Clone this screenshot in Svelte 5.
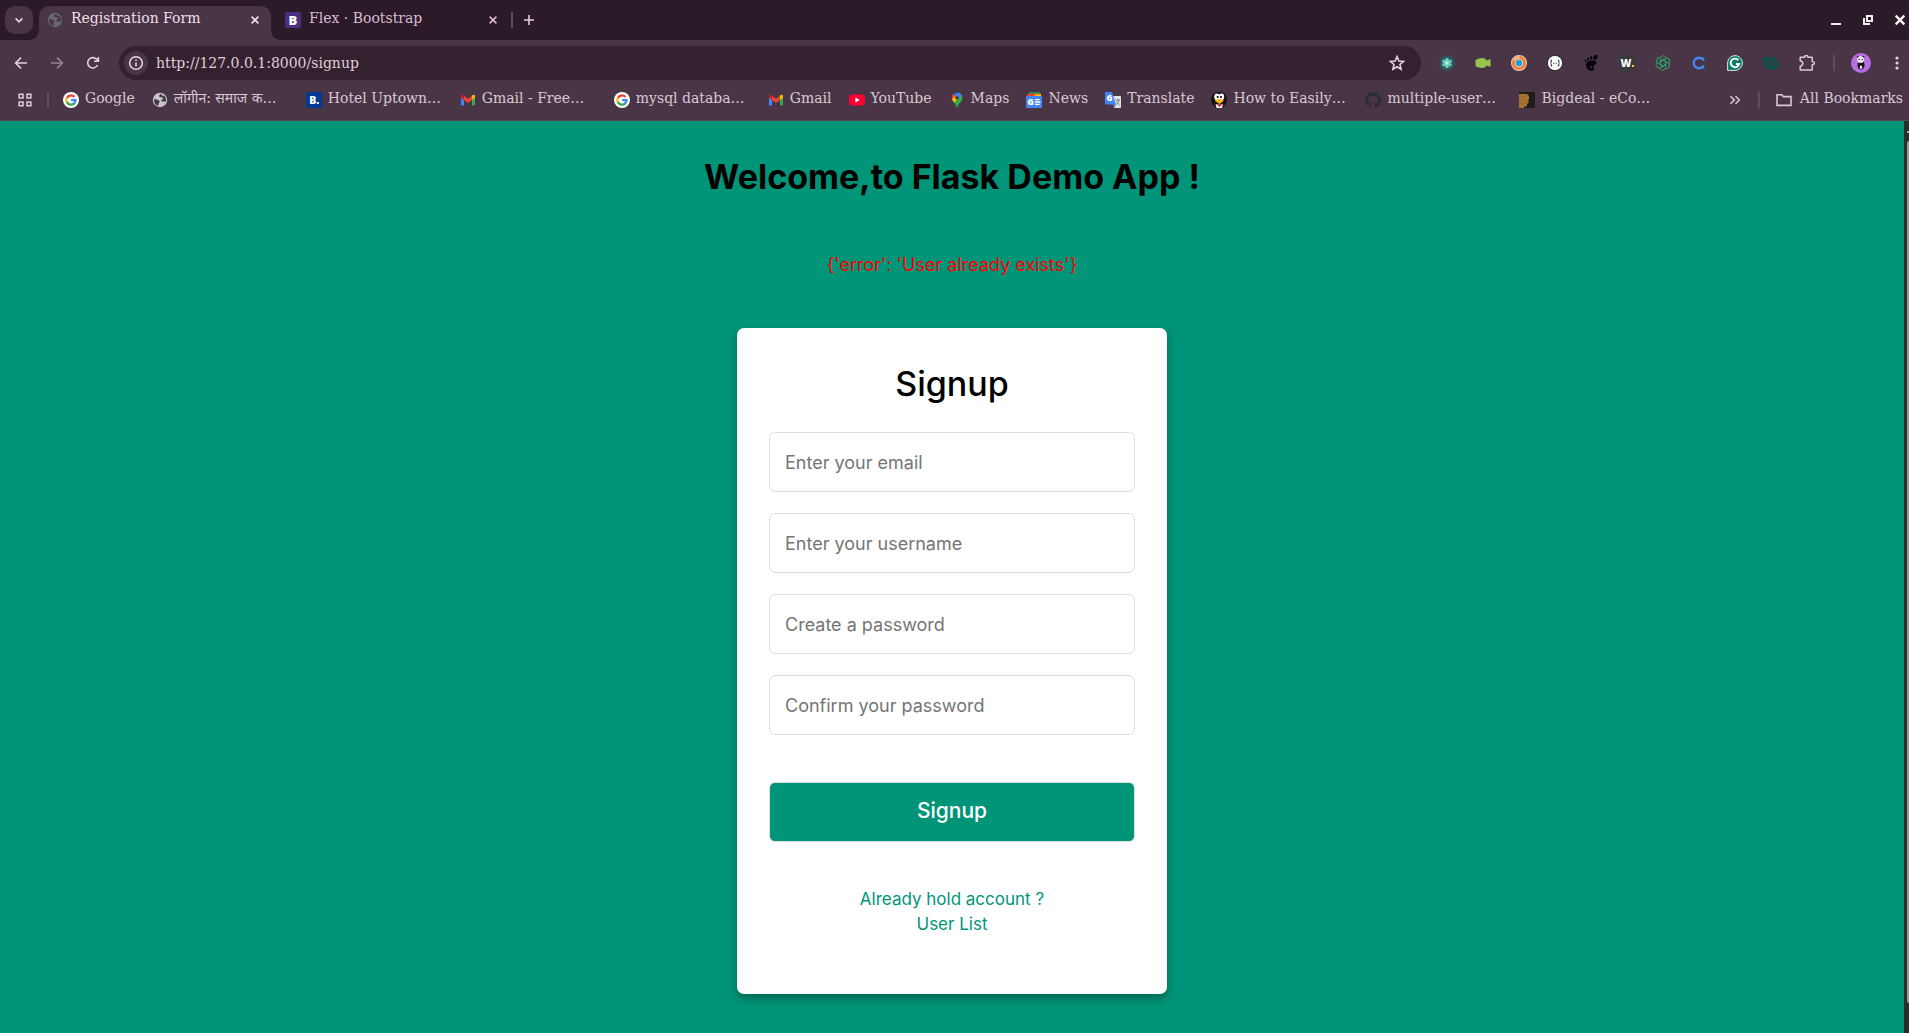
<script lang="ts">
  const bookmarks = [
    { icon: 'google', label: 'Google' },
    { icon: 'globe', label: 'लॉगीन: समाज क…', long: true },
    { icon: 'booking', label: 'Hotel Uptown…', long: true },
    { icon: 'gmail', label: 'Gmail - Free…', long: true },
    { icon: 'google', label: 'mysql databa…', long: true },
    { icon: 'gmail', label: 'Gmail' },
    { icon: 'youtube', label: 'YouTube' },
    { icon: 'maps', label: 'Maps' },
    { icon: 'news', label: 'News' },
    { icon: 'translate', label: 'Translate' },
    { icon: 'tux', label: 'How to Easily…', long: true },
    { icon: 'github', label: 'multiple-user…', long: true },
    { icon: 'bigdeal', label: 'Bigdeal - eCo…', long: true }
  ];
  const extensions = ['atom', 'fish', 'ring', 'braces', 'foot', 'w', 'knot', 'c', 'grammar', 'camera', 'puzzle'];
  const fields = [
    { id: 'email', type: 'email', hint: 'Enter your email' },
    { id: 'username', type: 'text', hint: 'Enter your username' },
    { id: 'password', type: 'password', hint: 'Create a password' },
    { id: 'confirm', type: 'password', hint: 'Confirm your password' }
  ];
  let url = $state('http://127.0.0.1:8000/signup');
</script>

{#snippet icon(name: string)}
  <svg class="icon" viewBox="0 0 16 16" aria-hidden="true">
    {#if name === 'google'}
      <circle cx="8" cy="8" r="8" fill="#fff" />
      <g fill="none" stroke-width="2.3">
        <path d="M11.5 5A4.7 4.7 0 0 0 3.9 5.9" stroke="#ea4335" />
        <path d="M3.9 5.8A4.7 4.7 0 0 0 3.9 10.3" stroke="#fbbc05" />
        <path d="M3.8 10.1A4.7 4.7 0 0 0 11.2 11.4" stroke="#34a853" />
        <path d="M8.1 8.1H12.6A4.6 4.6 0 0 1 11 11.6" stroke="#4285f4" />
      </g>
    {:else if name === 'globe' || name === 'globe-dim'}
      <circle cx="8" cy="8" r="7.2" fill={name === 'globe' ? '#c3c6ca' : '#65696f'} />
      <path d="M2.2 7.2C4.5 7 5.4 7.8 6.8 8.5C8.4 9.3 7.2 10.5 6.8 11.2C6.3 12.2 6.8 13.1 6 13.8C3.6 13 2 11 2 8ZM8.2 2.1L7 4L8 5.3L10.2 5.2L11.2 7.1L9 8.3L10.3 9.7L12.2 9.2L13.8 10C14.5 7.5 13.8 5 11.8 3.4L10.5 4.1L9.8 2.5Z" fill="#4a3546" />
    {:else if name === 'booking'}
      <rect width="16" height="16" rx="2" fill="#003b95" />
      <text x="3.2" y="12" class="glyph" font-size="10.5" fill="#fff">B.</text>
    {:else if name === 'bootstrap'}
      <rect width="16" height="16" rx="2" fill="#4b2e83" />
      <text x="3.4" y="12.8" class="glyph" font-size="13" fill="#fff">B</text>
    {:else if name === 'gmail'}
      <path d="M1 4.5V13.5H4V7Z" fill="#4285f4" /><path d="M15 4.5V13.5H12V7Z" fill="#34a853" />
      <path d="M1 4.2Q1 2.5 2.8 2.8L4 3.7V8L1 5.8Z" fill="#c5221f" />
      <path d="M4 3.7L8 6.7L12 3.7V8L8 11L4 8Z" fill="#ea4335" />
      <path d="M15 4.2Q15 2.5 13.2 2.8L12 3.7V8L15 5.8Z" fill="#fbbc04" />
    {:else if name === 'youtube'}
      <rect y="2.4" width="16" height="11.2" rx="3" fill="#ff0033" /><path d="M6.4 5.6L10.6 8L6.4 10.4Z" fill="#fff" />
    {:else if name === 'maps'}
      <path d="M8 .5A5.3 5.3 0 0 0 4 2.3L8 6Z" fill="#1a73e8" /><path d="M4 2.3C2.6 4 2.5 5.8 3 7.2L6.3 5.8L8 3.8Z" fill="#ea4335" />
      <path d="M8 .5C11 .6 13.3 2.9 13.3 5.8L8.7 6.6L7 4Z" fill="#4285f4" />
      <path d="M3 7.2C3.4 8.5 4.3 9.6 5.3 10.9L9.7 6L6.3 4Z" fill="#fbbc04" />
      <path d="M5.3 10.8C6.7 12.4 7.2 13.6 7.5 15Q8 16 8.5 15C9.3 11.2 13.3 10.5 13.3 5.8L12.4 3Z" fill="#34a853" />
      <circle cx="8" cy="5.8" r="1.8" fill="#4a3546" />
    {:else if name === 'news'}
      <path d="M3 0H14L13 5H3Z" fill="#0c9d58" /><path d="M1 2L12 1L13 6H2Z" fill="#ea4335" /><path d="M8 3L15 1.8V7H8Z" fill="#ffc107" />
      <rect y="4" width="16" height="12" rx="1" fill="#4285f4" />
      <text x="1.2" y="13" class="glyph" font-size="9" fill="#fff">G</text>
      <path d="M9 7.6H13.6M9 10H14.5M9 12.4H13.6" stroke="#fff" stroke-width="1.3" />
    {:else if name === 'translate'}
      <path d="M6 4H15Q16 4 16 5V15Q16 16 15 16H9Z" fill="#dfe3e8" /><path d="M8 12.5H11L9 16Z" fill="#2457c5" />
      <path d="M1 0H7L11 12.5H1Q0 12.5 0 11.5V1Q0 0 1 0Z" fill="#4285f4" />
      <text x="1.4" y="9.3" class="glyph" font-size="8" fill="#fff">G</text>
      <path d="M10.5 8H15M12.7 7V8M14.2 8Q13.5 11 11.5 12.4M11.5 9.5Q12.7 12 14.5 13" fill="none" stroke="#6b7480" stroke-width=".9" />
    {:else if name === 'tux'}
      <path d="M8 0C13 0 15.8 3 15.8 7.5C15.8 11 14 13.5 12 14.5L11 16H5L4 14.5C2 13.5 .2 11 .2 7.5C.2 3 3 0 8 0Z" fill="#14110f" />
      <ellipse cx="5.9" cy="4.8" rx="2.7" ry="3.4" fill="#fff" /><ellipse cx="10.5" cy="4.8" rx="2.7" ry="3.4" fill="#fff" />
      <circle cx="6.7" cy="5" r="1.1" /><circle cx="10" cy="5" r="1.1" />
      <path d="M4.5 12L8.3 12.8L12 12L11 16H5.5Z" fill="#f4f1ee" /><path d="M5 11.4L8 13L12 11.4L8.6 15Z" fill="#d6222a" /><path d="M3.5 8.8L8.3 6.6L13 8.8L8.5 12Z" fill="#f9b21a" />
    {:else if name === 'github'}
      <path fill="#292f36" d="M8 .2a8 8 0 0 0-2.5 15.6c.4.1.5-.2.5-.4v-1.5c-2.2.5-2.7-1-2.7-1-.4-.9-.9-1.2-.9-1.2-.7-.5.1-.5.1-.5.8.1 1.2.8 1.2.8.7 1.3 1.9.9 2.3.7.1-.5.3-.9.5-1.1-1.8-.2-3.6-.9-3.6-4 0-.9.3-1.6.8-2.1-.1-.2-.4-1 .1-2.1 0 0 .7-.2 2.2.8a7.6 7.6 0 0 1 4 0c1.5-1 2.2-.8 2.2-.8.4 1.1.2 1.9.1 2.1.5.6.8 1.3.8 2.1 0 3.1-1.9 3.7-3.7 3.9.3.3.6.8.6 1.5v2.4c0 .2.1.5.5.4A8 8 0 0 0 8 .2Z" />
    {:else if name === 'bigdeal'}
      <rect width="16" height="16" fill="#201d1b" /><path d="M0 2H8L10 4V7L9 8L10 10L8 12V14L5 15V16H0Z" fill="#a87432" /><path d="M0 5H7M0 8H8M0 11H7" stroke="#96652b" />
    {:else if name === 'atom'}
      <circle cx="8" cy="8" r="8" fill="#30505e" />
      <g fill="#65d3b7"><circle cx="8" cy="4.6" r="1.8" /><circle cx="11" cy="6.3" r="1.8" /><circle cx="11" cy="9.7" r="1.8" /><circle cx="8" cy="11.4" r="1.8" /><circle cx="5" cy="9.7" r="1.8" /><circle cx="5" cy="6.3" r="1.8" /></g>
      <circle cx="8" cy="8" r="2" fill="#b6f2df" />
    {:else if name === 'fish'}
      <path d="M.5 5Q3 3 8 3Q10 3 12 5.5L15.5 4V12L12 10.5Q10 13 7 13Q3 13 .5 11Z" fill="#98c34d" />
    {:else if name === 'ring'}
      <circle cx="8" cy="8" r="8" fill="#e7d9c7" /><circle cx="8" cy="8" r="5.6" fill="none" stroke="#f0803c" stroke-width="3.2" /><path d="M3 5A5.6 5.6 0 0 1 9 2.5" fill="none" stroke="#f9b27c" stroke-width="2.5" /><circle cx="8" cy="8" r="3.2" fill="#1a9fe0" />
    {:else if name === 'braces'}
      <circle cx="8" cy="8" r="7.6" fill="#fff" stroke="#171017" stroke-width=".8" />
      <path d="M5.2 5Q4 5 4.2 6.6Q4.2 8 3.4 8Q4.2 8 4.2 9.4Q4 11 5.2 11M10.8 5Q12 5 11.8 6.6Q11.8 8 12.6 8Q11.8 8 11.8 9.4Q12 11 10.8 11" fill="none" stroke="#333" stroke-width="1.1" />
      <path d="M6 8.2H7M7.5 8.2H8.5M9 8.2H10" stroke="#555" />
    {:else if name === 'foot'}
      <g fill="#080508"><path d="M13.4 6.8C14 10 11 9.5 10.6 11C10.4 12 11 12.2 11 13.4C11 15.2 9.4 16 7.6 15.8C5 15.4 3 13 3 10C3 6.5 6 5.3 9.2 5.4C11.4 5.4 13 5.4 13.4 6.8Z" /><ellipse cx="12.5" cy="2.3" rx="2" ry="2.5" transform="rotate(20 12.5 2.3)" /><ellipse cx="8.2" cy="2.9" rx="1.2" ry="1.8" /><ellipse cx="5.1" cy="4" rx="1" ry="1.5" /><ellipse cx="2.6" cy="5.8" rx=".9" ry="1.3" /></g>
      <path d="M7.4 10.8Q7.8 13 9.3 12.4" fill="none" stroke="#4a3546" stroke-width="1.3" />
    {:else if name === 'w'}
      <rect width="16" height="16" rx="1" fill="#383a39" /><text x="1.4" y="11.8" class="glyph" font-size="10.5" fill="#fff">W</text><circle cx="14" cy="10.9" r="1.2" fill="#efd34b" />
    {:else if name === 'knot'}
      <g fill="none" stroke="#2aa765" stroke-width="1">
        {#each [0, 60, 120, 180, 240, 300] as turn}
          <path d="M5.3 9.2V4.2C5.3 .4 10 -.2 11.4 2.6M8 5L11.8 7.1" transform="rotate({turn} 8 8)" />
        {/each}
      </g>
    {:else if name === 'c'}
      <path d="M12.2 4.8A5.3 5.3 0 1 0 12.2 11.2" fill="none" stroke="#4088f4" stroke-width="2.4" /><path d="M12.6 2.5V6M12.6 10V13.5" stroke="#4088f4" stroke-width="1.4" />
    {:else if name === 'grammar'}
      <path d="M8 .6A7.4 7.4 0 1 1 8 15.4H.6V8A7.4 7.4 0 0 1 8 .6Z" fill="#087d68" stroke="#d8e3df" stroke-width="1" />
      <path d="M11.4 5.2A4.3 4.3 0 1 0 12.2 9H9" fill="none" stroke="#fff" stroke-width="1.9" />
    {:else if name === 'camera'}
      <path d="M3.5 2H10Q13 2 13.5 5L16 12H13V14H3.5L.5 11V7L0 6V4Z" fill="#085348" /><rect x="5" y="5.2" width="5.6" height="5.2" rx="1.5" fill="none" stroke="#4a3546" stroke-width="1.2" /><circle cx="7.8" cy="7.8" r="1" fill="#4a3546" />
    {:else if name === 'puzzle'}
      <path d="M1.2 2.2H5.7Q5.8 .4 7.3 .4Q8.8 .4 9 2.2H13.2V6.4Q15.3 6.5 15.3 8.1Q15.3 9.7 13.2 9.8V14.9H1.2V11.2Q3.8 10.7 3.8 8.5Q3.8 6.3 1.2 5.8Z" fill="none" stroke="#e3c5dc" stroke-width="1.5" stroke-linejoin="round" />
    {:else if name === 'close'}
      <path d="M4.6 4.6L11.4 11.4M11.4 4.6L4.6 11.4" class="line" />
    {:else if name === 'plus'}
      <path d="M8 3V13M3 8H13" class="line" />
    {:else if name === 'chevron'}
      <path d="M4.6 6.4L8 9.8L11.4 6.4" class="line" />
    {:else if name === 'back'}
      <path d="M14 8H3M8 2.6L2.6 8L8 13.4" class="line" />
    {:else if name === 'forward'}
      <path d="M2 8H13M8 2.6L13.4 8L8 13.4" class="line" />
    {:else if name === 'reload'}
      <path d="M12.6 10A5.2 5.2 0 1 1 12 4.6L13.2 6M13.4 2V6.3H9" class="line" />
    {:else if name === 'info'}
      <circle cx="8" cy="8" r="6.3" class="line" /><path d="M8 7.4V11.2M8 4.6V6" class="line" />
    {:else if name === 'star'}
      <path d="M8 1.6L9.9 6L14.6 6.4L11 9.5L12.1 14.2L8 11.7L3.9 14.2L5 9.5L1.4 6.4L6.1 6Z" class="line" />
    {:else if name === 'apps'}
      <path d="M2.2 2.2H6V6H2.2ZM10 2.2H13.8V6H10ZM2.2 10H6V13.8H2.2ZM10 10H13.8V13.8H10Z" class="line" />
    {:else if name === 'more'}
      <path d="M3.5 4.2L7.3 8L3.5 11.8M8.5 4.2L12.3 8L8.5 11.8" class="line" />
    {:else if name === 'folder'}
      <path d="M1 2.8H5.7L7.4 4.6H15V13.4H1Z" class="line" />
    {:else if name === 'dots'}
      <g fill="currentColor"><circle cx="8" cy="3" r="1.6" /><circle cx="8" cy="8" r="1.6" /><circle cx="8" cy="13" r="1.6" /></g>
    {:else if name === 'minimize'}
      <path d="M3 12H13" stroke="currentColor" stroke-width="2" />
    {:else if name === 'restore'}
      <path d="M7 4H12V9H7ZM4 6V12H10" fill="none" stroke="currentColor" stroke-width="2" />
    {:else if name === 'quit'}
      <path d="M3.7 3.7L12.3 12.3M12.3 3.7L3.7 12.3" stroke="currentColor" stroke-width="2.4" />
    {:else if name === 'panda'}
      <circle cx="8" cy="8" r="8" fill="#b66fe3" /><ellipse cx="8" cy="9.5" rx="2.8" ry="3.8" fill="#181418" /><circle cx="7.6" cy="5.2" r="2.8" fill="#e8e4e6" /><path d="M4.7 3.4L6 2.6M9.3 2.6L10.7 3.4M6 5.2H7M8.5 5.2H9.4" stroke="#181418" stroke-width=".9" /><path d="M7.1 10.2H8.9V12.6H7.1Z" fill="#ece7ed" />
    {/if}
  </svg>
{/snippet}

<div class="window">
  <header class="chrome">
    <div class="tabs">
      <button class="tab-search" aria-label="Search tabs">{@render icon('chevron')}</button>
      <div class="tab active">
        {@render icon('globe-dim')}
        <span class="label">Registration Form</span>
        <button class="plain" aria-label="Close Registration Form">{@render icon('close')}</button>
      </div>
      <div class="tab">
        {@render icon('bootstrap')}
        <span class="label">Flex · Bootstrap</span>
        <button class="plain" aria-label="Close Flex">{@render icon('close')}</button>
      </div>
      <span class="divider"></span>
      <button class="plain add" aria-label="New tab">{@render icon('plus')}</button>
      <div class="controls">
        <button class="plain" aria-label="Minimize">{@render icon('minimize')}</button>
        <button class="plain" aria-label="Restore">{@render icon('restore')}</button>
        <button class="plain" aria-label="Close window">{@render icon('quit')}</button>
      </div>
    </div>

    <div class="toolbar">
      <nav class="history" aria-label="History">
        <button class="plain" aria-label="Back">{@render icon('back')}</button>
        <button class="plain dim" aria-label="Forward">{@render icon('forward')}</button>
        <button class="plain" aria-label="Reload">{@render icon('reload')}</button>
      </nav>
      <div class="omnibox">
        <button class="site" aria-label="Site information">{@render icon('info')}</button>
        <input type="text" aria-label="Address" bind:value={url} />
        <button class="plain star" aria-label="Bookmark this page">{@render icon('star')}</button>
      </div>
      <div class="extensions">
        {#each extensions as name}
          <button class="plain" aria-label={name}>{@render icon(name)}</button>
        {/each}
      </div>
      <span class="divider"></span>
      <div class="account">
        <button class="plain avatar" aria-label="Profile">{@render icon('panda')}</button>
        <button class="plain" aria-label="Menu">{@render icon('dots')}</button>
      </div>
    </div>

    <nav class="bookmarks" aria-label="Bookmarks">
      <button class="plain apps" aria-label="Apps">{@render icon('apps')}</button>
      <span class="divider"></span>
      <div class="links">
        {#each bookmarks as mark}
          <a href="#bookmark" class:long={mark.long}>{@render icon(mark.icon)}<span class="label">{mark.label}</span></a>
        {/each}
      </div>
      <button class="plain" aria-label="More bookmarks">{@render icon('more')}</button>
      <span class="divider"></span>
      <a class="all" href="#all">{@render icon('folder')}<span class="label">All Bookmarks</span></a>
    </nav>
  </header>

  <div class="viewport">
    <main>
      <h1>Welcome,to Flask Demo App !</h1>
      <p class="error">{"{'error': 'User already exists'}"}</p>
      <section class="card">
        <h2>Signup</h2>
        <form onsubmit={(e) => e.preventDefault()}>
          {#each fields as field}
            <input id={field.id} type={field.type} placeholder={field.hint} aria-label={field.hint} />
          {/each}
          <button class="submit" type="submit">Signup</button>
        </form>
        <div class="more">
          <a href="#login">Already hold account ?</a>
          <a href="#users">User List</a>
        </div>
      </section>
    </main>
    <div class="scrollbar" aria-hidden="true"><i class="arrow"></i><i class="thumb"></i></div>
  </div>
</div>

<style>
  :global(body) { background: #009578; }
  * { box-sizing: border-box; }
  .window { min-height: 100vh; display: flex; flex-direction: column; }
  .icon { width: 16px; height: 16px; flex: none; display: block; }
  .glyph { font-family: "Open Sans", sans-serif; font-weight: 800; }
  .line { fill: none; stroke: currentColor; stroke-width: 1.6; }
  button { font: inherit; color: inherit; border: 0; background: none; padding: 0; cursor: pointer; }
  .plain { flex: none; }
  .dim { opacity: .5; }
  a { color: inherit; text-decoration: none; }

  .chrome { background: #4a3546; color: #e6cfe0; font: 14px/20px "DejaVu Serif", "Noto Sans", serif; border-bottom: 1px solid #5a4a56; }
  .divider { flex: none; width: 2px; height: 16px; background: #614b5d; }
  .label { padding-bottom: 4px; white-space: nowrap; }
  .tabs { height: 40px; background: #2b1a28; display: flex; align-items: center; padding: 0 1px 0 5px; }
  .tab-search { width: 28px; height: 28px; border-radius: 10px; background: #4a3546; display: grid; place-items: center; margin-right: 6px; }
  .tab { height: 34px; width: 232px; align-self: flex-end; display: flex; align-items: center; gap: 8px; padding: 0 8px 6px; }
  .tab .label { flex: 1; }
  .tab:not(.active) { margin-left: 6px; color: #d9b9d3; }
  .active { position: relative; background: #4a3546; border-radius: 10px 10px 0 0; color: #f0dfec; }
  .active::before, .active::after { content: ""; position: absolute; bottom: 0; width: 10px; height: 10px; }
  .active::before { right: 100%; background: radial-gradient(circle at 0 0, transparent 10px, #4a3546 10px); }
  .active::after { left: 100%; background: radial-gradient(circle at 100% 0, transparent 10px, #4a3546 10px); }
  .tabs .divider { margin-left: 2px; }
  .add { margin-left: 8px; }
  .controls { margin-left: auto; display: flex; gap: 16px; color: #f3edf2; }

  .toolbar { height: 46px; display: flex; align-items: center; padding: 0 4px 0 13px; }
  .history { display: flex; gap: 20px; margin-right: 18px; }
  .omnibox { flex: 1; height: 34px; border-radius: 17px; background: #34212f; display: flex; align-items: center; padding: 0 16px 0 5px; }
  .site { width: 24px; height: 24px; border-radius: 50%; background: #4a3546; display: grid; place-items: center; margin-right: 8px; }
  .omnibox input { flex: 1; min-width: 0; border: 0; outline: 0; background: none; color: #e0cddb; font: inherit; padding: 0; }
  .extensions { display: flex; gap: 20px; margin: 0 18px; }
  .account { display: flex; align-items: center; gap: 18px; margin-left: 16px; }
  .avatar .icon { width: 20px; height: 20px; }

  .bookmarks { height: 34px; display: flex; align-items: center; padding: 0 6px 6px 17px; color: #d8c8d3; }
  .apps { margin-right: 14px; }
  .links { flex: 1; min-width: 0; display: flex; margin-left: 14px; overflow: hidden; }
  .bookmarks a { display: flex; align-items: center; gap: 6px; flex: none; }
  .links a { padding-right: 17px; }
  .links .long { width: 154px; padding-right: 0; }
  .bookmarks .all { gap: 8px; margin-left: 16px; }
  .links + .plain { margin-right: 15px; }

  .viewport { flex: 1; display: flex; font-family: Inter, "Open Sans", sans-serif; background: #009578; }
  main { flex: 1; display: flex; flex-direction: column; align-items: center; padding: 32px 16px 36px; }
  h1 { margin: 0; font-size: 34px; line-height: 48px; font-weight: 700; color: #000; text-align: center; }
  .error { margin: 49px 0 48px; font-size: 18px; line-height: 30px; color: #f00; }
  .card { width: 100%; max-width: 430px; background: #fff; border-radius: 7px; padding: 32px; box-shadow: 0 5px 10px rgba(0, 0, 0, .3); }
  h2 { margin: 0 0 24px; font-size: 34px; line-height: 48px; font-weight: 500; text-align: center; color: #000; }
  form { display: flex; flex-direction: column; gap: 21px; }
  form input { height: 60px; width: 100%; border: 1px solid #ddd; border-radius: 6px; padding: 0 15px; font: 18px/24px Inter, "Open Sans", sans-serif; outline: 0; }
  form input::placeholder { color: #757575; opacity: 1; }
  .submit { height: 60px; margin-top: 26px; background: #009578; border: 1px solid #ddd; border-radius: 6px; color: #fff; font-size: 21px; font-weight: 500; padding-bottom: 4px; }
  .more { display: flex; flex-direction: column; align-items: center; padding: 45px 0 25px; font-size: 17px; line-height: 25px; color: #009578; }

  .scrollbar { width: 5px; background: #2b2b2b; display: flex; flex-direction: column; align-items: flex-end; gap: 8px; padding: 10px 0 30px; }
  .arrow { width: 2px; height: 2px; background: #aaa; }
  .thumb { width: 2px; flex: 1; background: #9b9b9b; border-radius: 2px 0 0 2px; }
</style>
